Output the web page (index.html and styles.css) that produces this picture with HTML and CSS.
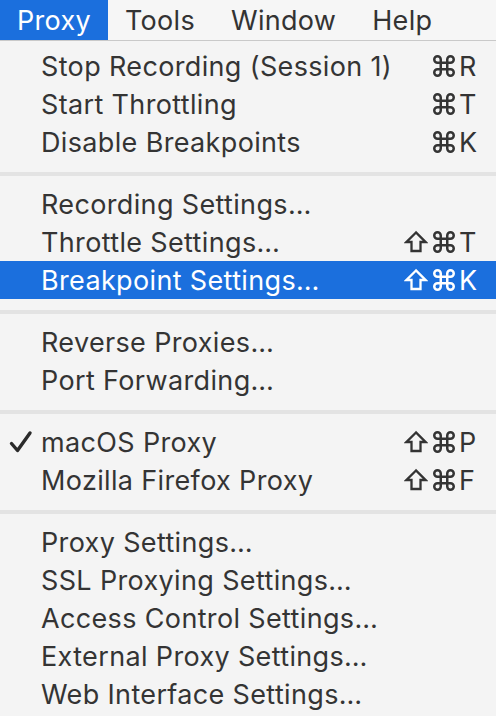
FILE: index.html
```html
<!DOCTYPE html>
<html>
<head>
<meta charset="utf-8">
<link rel="stylesheet" href="styles.css">
</head>
<body>
<div class="menubar">
  <div class="mb-item active">Proxy</div>
  <div class="mb-item">Tools</div>
  <div class="mb-item">Window</div>
  <div class="mb-item">Help</div>
</div>
<div class="menu">
  <div class="row"><span class="check"></span><span class="label">Stop Recording (Session 1)</span><span class="keys"><svg class="ic cmd" viewBox="0 0 24 24"><path d="M15 6v12a3 3 0 1 0 3-3H6a3 3 0 1 0 3 3V6a3 3 0 1 0-3 3h12a3 3 0 1 0-3-3"/></svg><span class="key">R</span></span></div>
  <div class="row"><span class="check"></span><span class="label">Start Throttling</span><span class="keys"><svg class="ic cmd" viewBox="0 0 24 24"><path d="M15 6v12a3 3 0 1 0 3-3H6a3 3 0 1 0 3 3V6a3 3 0 1 0-3 3h12a3 3 0 1 0-3-3"/></svg><span class="key">T</span></span></div>
  <div class="row"><span class="check"></span><span class="label">Disable Breakpoints</span><span class="keys"><svg class="ic cmd" viewBox="0 0 24 24"><path d="M15 6v12a3 3 0 1 0 3-3H6a3 3 0 1 0 3 3V6a3 3 0 1 0-3 3h12a3 3 0 1 0-3-3"/></svg><span class="key">K</span></span></div>
  <div class="sep"></div>
  <div class="row"><span class="check"></span><span class="label">Recording Settings…</span></div>
  <div class="row"><span class="check"></span><span class="label">Throttle Settings…</span><span class="keys"><svg class="ic shift" viewBox="0 0 24 24"><path d="M12 2.5 L2.5 12 H7.5 V21 H16.5 V12 H21.5 Z"/></svg><svg class="ic cmd" viewBox="0 0 24 24"><path d="M15 6v12a3 3 0 1 0 3-3H6a3 3 0 1 0 3 3V6a3 3 0 1 0-3 3h12a3 3 0 1 0-3-3"/></svg><span class="key">T</span></span></div>
  <div class="row selected"><span class="check"></span><span class="label">Breakpoint Settings…</span><span class="keys"><svg class="ic shift" viewBox="0 0 24 24"><path d="M12 2.5 L2.5 12 H7.5 V21 H16.5 V12 H21.5 Z"/></svg><svg class="ic cmd" viewBox="0 0 24 24"><path d="M15 6v12a3 3 0 1 0 3-3H6a3 3 0 1 0 3 3V6a3 3 0 1 0-3 3h12a3 3 0 1 0-3-3"/></svg><span class="key">K</span></span></div>
  <div class="sep"></div>
  <div class="row"><span class="check"></span><span class="label">Reverse Proxies…</span></div>
  <div class="row"><span class="check"></span><span class="label">Port Forwarding…</span></div>
  <div class="sep"></div>
  <div class="row"><span class="check"><svg viewBox="0 0 24 24" width="24" height="24"><path d="M2.5 13.5 L8.5 20.5 L21 3" fill="none" stroke="currentColor" stroke-width="3.4" stroke-linecap="round" stroke-linejoin="round"/></svg></span><span class="label">macOS Proxy</span><span class="keys"><svg class="ic shift" viewBox="0 0 24 24"><path d="M12 2.5 L2.5 12 H7.5 V21 H16.5 V12 H21.5 Z"/></svg><svg class="ic cmd" viewBox="0 0 24 24"><path d="M15 6v12a3 3 0 1 0 3-3H6a3 3 0 1 0 3 3V6a3 3 0 1 0-3 3h12a3 3 0 1 0-3-3"/></svg><span class="key">P</span></span></div>
  <div class="row"><span class="check"></span><span class="label">Mozilla Firefox Proxy</span><span class="keys"><svg class="ic shift" viewBox="0 0 24 24"><path d="M12 2.5 L2.5 12 H7.5 V21 H16.5 V12 H21.5 Z"/></svg><svg class="ic cmd" viewBox="0 0 24 24"><path d="M15 6v12a3 3 0 1 0 3-3H6a3 3 0 1 0 3 3V6a3 3 0 1 0-3 3h12a3 3 0 1 0-3-3"/></svg><span class="key">F</span></span></div>
  <div class="sep"></div>
  <div class="row"><span class="check"></span><span class="label">Proxy Settings…</span></div>
  <div class="row"><span class="check"></span><span class="label">SSL Proxying Settings…</span></div>
  <div class="row"><span class="check"></span><span class="label">Access Control Settings…</span></div>
  <div class="row"><span class="check"></span><span class="label">External Proxy Settings…</span></div>
  <div class="row"><span class="check"></span><span class="label">Web Interface Settings…</span></div>
</div>
</body>
</html>
```
FILE: styles.css
```css
* { box-sizing: border-box; }
html, body {
  margin: 0;
  padding: 0;
  background: #f4f4f4;
  width: 496px;
  height: 716px;
  overflow: hidden;
  font-family: Inter, "Noto Sans", sans-serif;
  color: #343434;
}
.menubar {
  display: flex;
  height: 41px;
  background: #f6f6f6;
  border-bottom: 1px solid #c9c9c9;
  font-size: 27px;
  letter-spacing: 0.3px;
}
.mb-item {
  display: flex;
  align-items: center;
  padding: 0 19px 0 17px;
  height: 40px;
  color: #333;
}
.mb-item.active {
  background: #1b6fdd;
  color: #fff;
  width: 108px;
}
.menu {
  padding-top: 6px;
  font-size: 27px;
  letter-spacing: 0.35px;
}
.row {
  display: flex;
  align-items: center;
  height: 38px;
}
.row.selected {
  background: #1b6fdd;
  color: #fff;
}
.check {
  width: 41px;
  display: flex;
  justify-content: center;
  color: #2a2a2a;
}
.label {
  flex: 1;
  white-space: nowrap;
}
.keys {
  display: flex;
  align-items: center;
  padding-right: 13px;
}
.ic {
  fill: none;
  stroke: currentColor;
  stroke-linejoin: round;
  stroke-linecap: round;
}
.ic.shift {
  width: 24px;
  height: 24px;
  stroke-width: 2.3;
  stroke-linejoin: miter;
  margin-right: 3px;
}
.ic.cmd {
  width: 26px;
  height: 26px;
  stroke-width: 2.3;
}
.key {
  width: 24px;
  margin-left: 2px;
}
.sep {
  height: 24px;
  padding-top: 11px;
}
.sep::before {
  content: "";
  display: block;
  height: 4px;
  background: #e3e3e3;
}
```
